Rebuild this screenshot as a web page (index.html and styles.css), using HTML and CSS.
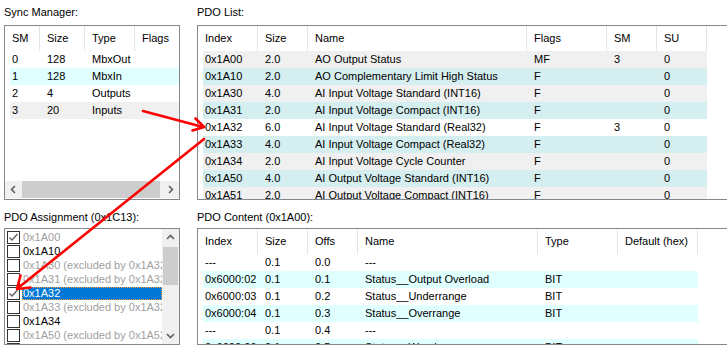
FILE: index.html
```html
<!DOCTYPE html>
<html lang="en">
<head>
    <meta charset="UTF-8">
    <title>Process Data</title>
    <link rel="stylesheet" href="styles.css">
</head>
<body>
    <div class="page">
        <!-- Sync Manager -->
        <section class="panel">
            <div class="label">Sync Manager:</div>
            <div class="box box-top">
                <div class="list sm-cols">
                    <div class="row head"><div class="cell">SM</div><div class="cell">Size</div><div class="cell">Type</div><div class="cell">Flags</div></div>
                    <div class="row"><div class="cell">0</div><div class="cell">128</div><div class="cell">MbxOut</div><div class="cell"></div></div>
                    <div class="row cyan"><div class="cell">1</div><div class="cell">128</div><div class="cell">MbxIn</div><div class="cell"></div></div>
                    <div class="row"><div class="cell">2</div><div class="cell">4</div><div class="cell">Outputs</div><div class="cell"></div></div>
                    <div class="row grey"><div class="cell">3</div><div class="cell">20</div><div class="cell">Inputs</div><div class="cell"></div></div>
                </div>
                <div class="hscroll">
                    <div class="arrow">
                        <svg width="17" height="17" viewBox="0 0 17 17"><polyline points="10,5 6.5,8.5 10,12" fill="none" stroke="#606060" stroke-width="1.6"/></svg>
                    </div>
                    <div class="hthumb"></div>
                    <div class="arrow">
                        <svg width="17" height="17" viewBox="0 0 17 17"><polyline points="7,5 10.5,8.5 7,12" fill="none" stroke="#606060" stroke-width="1.6"/></svg>
                    </div>
                </div>
            </div>
        </section>

        <!-- PDO List -->
        <section class="panel">
            <div class="label">PDO List:</div>
            <div class="box box-top">
                <div class="list pdo-cols">
                    <div class="row head"><div class="cell">Index</div><div class="cell">Size</div><div class="cell">Name</div><div class="cell">Flags</div><div class="cell">SM</div><div class="cell">SU</div></div>
                    <div class="row grey"><div class="cell">0x1A00</div><div class="cell">2.0</div><div class="cell">AO Output Status</div><div class="cell">MF</div><div class="cell">3</div><div class="cell">0</div></div>
                    <div class="row teal"><div class="cell">0x1A10</div><div class="cell">2.0</div><div class="cell">AO Complementary Limit High Status</div><div class="cell">F</div><div class="cell"></div><div class="cell">0</div></div>
                    <div class="row grey"><div class="cell">0x1A30</div><div class="cell">4.0</div><div class="cell">AI Input Voltage Standard (INT16)</div><div class="cell">F</div><div class="cell"></div><div class="cell">0</div></div>
                    <div class="row teal"><div class="cell">0x1A31</div><div class="cell">2.0</div><div class="cell">AI Input Voltage Compact (INT16)</div><div class="cell">F</div><div class="cell"></div><div class="cell">0</div></div>
                    <div class="row"><div class="cell">0x1A32</div><div class="cell">6.0</div><div class="cell">AI Input Voltage Standard (Real32)</div><div class="cell">F</div><div class="cell">3</div><div class="cell">0</div></div>
                    <div class="row teal"><div class="cell">0x1A33</div><div class="cell">4.0</div><div class="cell">AI Input Voltage Compact (Real32)</div><div class="cell">F</div><div class="cell"></div><div class="cell">0</div></div>
                    <div class="row grey"><div class="cell">0x1A34</div><div class="cell">2.0</div><div class="cell">AI Input Voltage Cycle Counter</div><div class="cell">F</div><div class="cell"></div><div class="cell">0</div></div>
                    <div class="row teal"><div class="cell">0x1A50</div><div class="cell">4.0</div><div class="cell">AI Output Voltage Standard (INT16)</div><div class="cell">F</div><div class="cell"></div><div class="cell">0</div></div>
                    <div class="row grey"><div class="cell">0x1A51</div><div class="cell">2.0</div><div class="cell">AI Output Voltage Compact (INT16)</div><div class="cell">F</div><div class="cell"></div><div class="cell">0</div></div>
                </div>
            </div>
        </section>

        <!-- PDO Assignment -->
        <section class="panel lower">
            <div class="label">PDO Assignment (0x1C13):</div>
            <div class="box box-bottom assign">
                <div class="items">
                    <div class="item off"><span class="check"><svg width="11" height="11" viewBox="0 0 11 11"><polyline points="1.5,5.5 4,8 9.5,2" fill="none" stroke="#5f5f5f" stroke-width="1.3"/></svg></span><span class="text">0x1A00</span></div>
                    <div class="item"><span class="check"></span><span class="text">0x1A10</span></div>
                    <div class="item off"><span class="check"></span><span class="text">0x1A30 (excluded by 0x1A32)</span></div>
                    <div class="item off"><span class="check"></span><span class="text">0x1A31 (excluded by 0x1A32)</span></div>
                    <div class="item selected"><span class="check"><svg width="11" height="11" viewBox="0 0 11 11"><polyline points="1.5,5.5 4,8 9.5,2" fill="none" stroke="#5f5f5f" stroke-width="1.3"/></svg></span><span class="text">0x1A32</span></div>
                    <div class="item off"><span class="check"></span><span class="text">0x1A33 (excluded by 0x1A32)</span></div>
                    <div class="item"><span class="check"></span><span class="text">0x1A34</span></div>
                    <div class="item off"><span class="check"></span><span class="text">0x1A50 (excluded by 0x1A52)</span></div>
                    <div class="item off"><span class="check"></span><span class="text">0x1A51 (excluded by 0x1A52)</span></div>
                </div>
                <div class="vscroll">
                    <div class="arrow">
                        <svg width="17" height="17" viewBox="0 0 17 17"><polyline points="5,10 8.5,6.5 12,10" fill="none" stroke="#606060" stroke-width="1.6"/></svg>
                    </div>
                    <div class="vthumb"></div>
                    <div class="vtrack"></div>
                    <div class="arrow">
                        <svg width="17" height="17" viewBox="0 0 17 17"><polyline points="5,7 8.5,10.5 12,7" fill="none" stroke="#606060" stroke-width="1.6"/></svg>
                    </div>
                </div>
            </div>
        </section>

        <!-- PDO Content -->
        <section class="panel lower">
            <div class="label">PDO Content (0x1A00):</div>
            <div class="box box-bottom">
                <div class="list content-cols">
                    <div class="row head"><div class="cell">Index</div><div class="cell">Size</div><div class="cell">Offs</div><div class="cell">Name</div><div class="cell">Type</div><div class="cell">Default (hex)</div></div>
                    <div class="row"><div class="cell">---</div><div class="cell">0.1</div><div class="cell">0.0</div><div class="cell">---</div><div class="cell"></div><div class="cell"></div></div>
                    <div class="row cyan"><div class="cell">0x6000:02</div><div class="cell">0.1</div><div class="cell">0.1</div><div class="cell">Status__Output Overload</div><div class="cell">BIT</div><div class="cell"></div></div>
                    <div class="row"><div class="cell">0x6000:03</div><div class="cell">0.1</div><div class="cell">0.2</div><div class="cell">Status__Underrange</div><div class="cell">BIT</div><div class="cell"></div></div>
                    <div class="row cyan"><div class="cell">0x6000:04</div><div class="cell">0.1</div><div class="cell">0.3</div><div class="cell">Status__Overrange</div><div class="cell">BIT</div><div class="cell"></div></div>
                    <div class="row"><div class="cell">---</div><div class="cell">0.1</div><div class="cell">0.4</div><div class="cell">---</div><div class="cell"></div><div class="cell"></div></div>
                    <div class="row cyan"><div class="cell">0x6000:06</div><div class="cell">0.1</div><div class="cell">0.5</div><div class="cell">Status__Warning</div><div class="cell">BIT</div><div class="cell"></div></div>
                </div>
            </div>
        </section>
    </div>

    <!-- annotation arrows drawn over the dialog -->
    <svg class="arrows" width="727" height="347" viewBox="0 0 727 347">
        <g fill="none" stroke="#ff0000" stroke-width="2.6" stroke-linecap="round" stroke-linejoin="round">
            <line x1="143" y1="111" x2="203" y2="127"/>
            <polyline points="195.5,118.5 204,127 192.5,130.5"/>
            <line x1="204" y1="139" x2="18" y2="288"/>
            <polyline points="20.5,275.5 17,289 30.5,287.5"/>
        </g>
    </svg>
</body>
</html>
```

FILE: styles.css
```css
body {
    margin: 0;
    width: 727px;
    height: 347px;
    overflow: hidden;
    position: relative;
    background: #fff;
    color: #000;
    font-family: "Liberation Sans", Arial, sans-serif;
    font-size: 11px;
}
.page {
    display: grid;
    grid-template-columns: 176px 560px;
    column-gap: 17px;
    padding: 4px 0 0 4px;
}
.label {
    height: 17px;
    line-height: 17px;
    margin-bottom: 4px;
    white-space: nowrap;
}
.lower {
    padding-top: 9px;
}
.lower .label {
    margin-bottom: 2px;
}
.box {
    box-sizing: border-box;
    border: 1px solid #828790;
    background: #fff;
    overflow: hidden;
}
.box-top {
    height: 175px;
    display: flex;
    flex-direction: column;
}
.box-bottom {
    height: 117px;
}

/* list views */
.list {
    padding-left: 5px;
}
.row {
    display: grid;
    width: max-content;
    height: 17px;
    line-height: 17px;
    white-space: nowrap;
}
.row.head {
    height: 25px;
    line-height: 25px;
}
.cell {
    box-sizing: border-box;
    padding-left: 7px;
    overflow: hidden;
}
.cell:first-child {
    padding-left: 2px;
}
.head .cell {
    border-right: 1px solid #e5e5e5;
}
.grey {
    background: #f0f0f0;
}
.teal {
    background: #d5eef0;
}
.cyan {
    background: #e0ffff;
}
.sm-cols .row {
    grid-template-columns: 30px 45px 50px 50px;
}
.pdo-cols .row {
    grid-template-columns: 55px 50px 219px 80px 50px 50px;
}
.content-cols .row {
    grid-template-columns: 55px 50px 50px 180px 80px 80px;
}

/* scrollbars */
.hscroll {
    display: flex;
    height: 17px;
    margin: auto 0 1px;
    background: #f0f0f0;
}
.hthumb {
    flex: 1;
    background: #cdcdcd;
    margin-right: 2px;
}
.arrow {
    width: 17px;
    height: 17px;
    flex: none;
}
.arrow svg {
    display: block;
}

/* assignment checklist */
.assign {
    display: flex;
}
.items {
    flex: 1;
    min-width: 0;
    overflow: hidden;
    padding: 1px 0 0 2px;
}
.item {
    display: flex;
    align-items: center;
    height: 14px;
    white-space: nowrap;
}
.check {
    box-sizing: border-box;
    flex: none;
    width: 13px;
    height: 13px;
    margin-right: 2px;
    border: 1px solid #333;
    background: #fff;
}
.check svg {
    display: block;
}
.item .text {
    flex: 1;
    height: 13px;
    line-height: 13px;
    padding: 0 1px;
}
.item.off .text {
    color: #a0a0a0;
}
.item.selected .text {
    background: #0078d7;
    color: #fff;
    outline: 1px dotted #ff9a2e;
    outline-offset: -1px;
}
.vscroll {
    display: flex;
    flex-direction: column;
    width: 17px;
    flex: none;
    background: #f0f0f0;
}
.vthumb {
    height: 38px;
    margin: 1px 1px 0;
    background: #cdcdcd;
}
.vtrack {
    flex: 1;
}

.arrows {
    position: absolute;
    top: 0;
    left: 0;
    pointer-events: none;
}
```
